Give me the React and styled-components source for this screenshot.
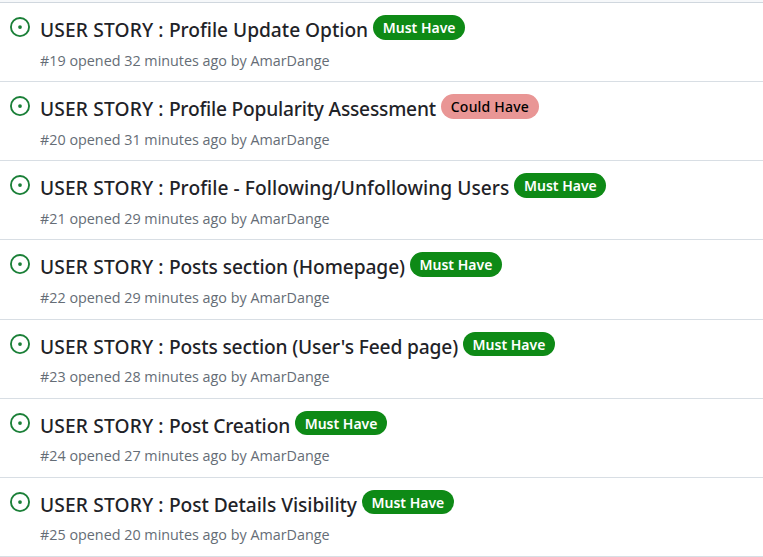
import React from "react";
import styled, { createGlobalStyle } from "styled-components";

const GlobalStyle = createGlobalStyle`
  * { box-sizing: border-box; }
  body {
    margin: 0;
    overflow: hidden;
    background: #ffffff;
    font-family: "Segoe UI", "Open Sans", "Noto Sans", sans-serif;
  }
`;

const Page = styled.main`
  width: 763px;
  height: 557px;
  overflow: hidden;
`;

const HeaderEdge = styled.div`
  height: 3px;
  background: #f6f8fa;
  border-bottom: 1px solid #d0d7de;
`;

const IssueList = styled.ul`
  margin: 0;
  padding: 0;
  list-style: none;
`;

const IssueRow = styled.li`
  display: flex;
  height: 79.14px;
  padding: 12px 10px 0;
  gap: 10px;
  border-bottom: 1px solid #d8dee4;
`;

const OpenIcon = styled.svg`
  flex: none;
  width: 20px;
  height: 20px;
  margin-top: 2px;
  fill: #1a7f37;
`;

const Content = styled.div`
  min-width: 0;
`;

const TitleLine = styled.div`
  display: flex;
  align-items: flex-start;
  gap: 5px;
  height: 32.57px;
`;

const Title = styled.a`
  color: #1f2328;
  font-family: "Segoe UI", "Noto Sans", sans-serif;
  font-size: 19.2px;
  font-weight: 500;
  line-height: 30px;
  letter-spacing: ${({ $tracking }) => $tracking}px;
  white-space: nowrap;
`;

const Prefix = styled.span`
  letter-spacing: 0.14px;
`;

const Label = styled.span`
  display: block;
  width: ${({ $could }) => ($could ? 98 : 92)}px;
  height: 24.5px;
  border-radius: 13px;
  background: ${({ $could }) => ($could ? "#e99695" : "#0e8a16")};
  color: ${({ $could }) => ($could ? "#000000" : "#ffffff")};
  font-family: "Segoe UI", "Noto Sans", sans-serif;
  font-size: 14px;
  font-weight: ${({ $could }) => ($could ? 500 : 600)};
  letter-spacing: ${({ $could }) => ($could ? 0.2 : 0)}px;
  line-height: 25px;
  text-align: center;
  white-space: nowrap;
`;

const Meta = styled.div`
  color: #656d76;
  font-size: 14.35px;
  line-height: 25.6px;
  white-space: nowrap;
`;

const issues = [
  { id: 19, title: "Profile Update Option", age: 32, tracking: -0.03 },
  { id: 20, title: "Profile Popularity Assessment", age: 31, tracking: -0.21, could: true },
  { id: 21, title: "Profile - Following/Unfollowing Users", age: 29, tracking: 0.04 },
  { id: 22, title: "Posts section (Homepage)", age: 29, tracking: -0.1 },
  { id: 23, title: "Posts section (User's Feed page)", age: 28, tracking: -0.15 },
  { id: 24, title: "Post Creation", age: 27, tracking: -0.16 },
  { id: 25, title: "Post Details Visibility", age: 20, tracking: -0.065 },
];

export default function App() {
  return (
    <Page>
      <GlobalStyle />
      <HeaderEdge />
      <IssueList>
        {issues.map((issue) => (
          <IssueRow key={issue.id}>
            <OpenIcon viewBox="0 0 16 16" aria-hidden="true">
              <path d="M8 9.5a1.5 1.5 0 1 0 0-3 1.5 1.5 0 0 0 0 3Z" />
              <path d="M8 0a8 8 0 1 1 0 16A8 8 0 0 1 8 0ZM1.5 8a6.5 6.5 0 1 0 13 0 6.5 6.5 0 0 0-13 0Z" />
            </OpenIcon>
            <Content>
              <TitleLine>
                <Title $tracking={issue.tracking}>
                  <Prefix>USER STORY : </Prefix>
                  {issue.title}
                </Title>
                <Label $could={issue.could}>{issue.could ? "Could Have" : "Must Have"}</Label>
              </TitleLine>
              <Meta>
                #{issue.id} opened {issue.age} minutes ago by AmarDange
              </Meta>
            </Content>
          </IssueRow>
        ))}
      </IssueList>
    </Page>
  );
}
